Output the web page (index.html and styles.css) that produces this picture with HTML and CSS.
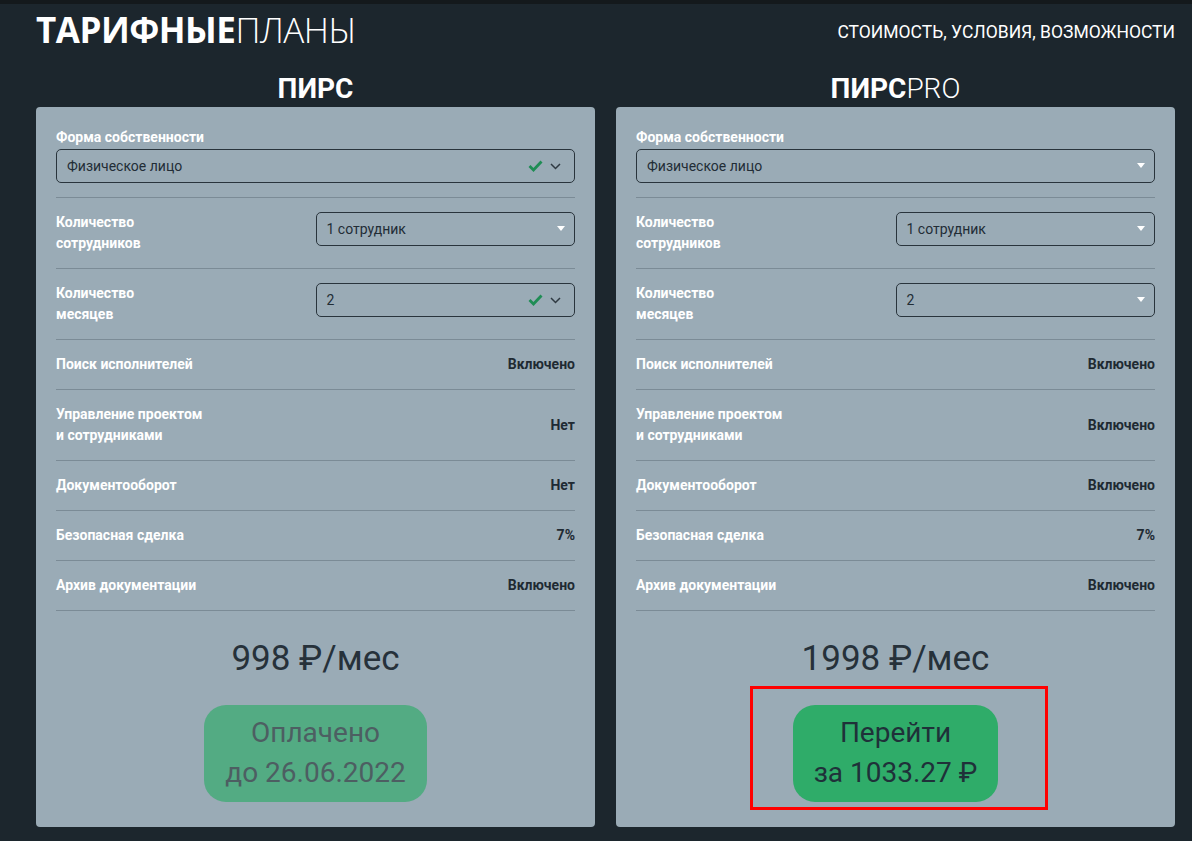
FILE: index.html
```html
<!DOCTYPE html>
<html lang="ru">
<head>
<meta charset="utf-8">
<title>Тарифные планы</title>
<link rel="stylesheet" href="styles.css">
</head>
<body>
<div class="page">
  <header class="header">
    <h1 class="title"><b>ТАРИФНЫЕ</b>ПЛАНЫ</h1>
    <div class="subtitle">СТОИМОСТЬ, УСЛОВИЯ, ВОЗМОЖНОСТИ</div>
  </header>

  <div class="plans">
    <section class="plan">
      <h2 class="plan-title"><b>ПИРС</b></h2>
      <div class="card">
        <div class="row row-stack">
          <div class="label">Форма собственности</div>
          <div class="select">
            <span>Физическое лицо</span>
            <span class="valid">
              <svg class="check" width="15" height="12" viewBox="0 0 15 12"><path d="M1.5 6 L5.5 10 L13.5 1.5" fill="none" stroke="#1f8d55" stroke-width="2.8"/></svg>
              <svg class="chev" width="11" height="7" viewBox="0 0 11 7"><path d="M1 1 L5.5 5.5 L10 1" fill="none" stroke="#2f3a42" stroke-width="1.5"/></svg>
            </span>
          </div>
        </div>
        <div class="row row-grid">
          <div class="label">Количество<br>сотрудников</div>
          <div class="select">
            <span>1 сотрудник</span>
            <span class="caret"></span>
          </div>
        </div>
        <div class="row row-grid">
          <div class="label">Количество<br>месяцев</div>
          <div class="select">
            <span>2</span>
            <span class="valid">
              <svg class="check" width="15" height="12" viewBox="0 0 15 12"><path d="M1.5 6 L5.5 10 L13.5 1.5" fill="none" stroke="#1f8d55" stroke-width="2.8"/></svg>
              <svg class="chev" width="11" height="7" viewBox="0 0 11 7"><path d="M1 1 L5.5 5.5 L10 1" fill="none" stroke="#2f3a42" stroke-width="1.5"/></svg>
            </span>
          </div>
        </div>
        <div class="row row-line"><div class="label">Поиск исполнителей</div><div class="value">Включено</div></div>
        <div class="row row-line"><div class="label">Управление проектом<br>и сотрудниками</div><div class="value">Нет</div></div>
        <div class="row row-line"><div class="label">Документооборот</div><div class="value">Нет</div></div>
        <div class="row row-line"><div class="label">Безопасная сделка</div><div class="value">7%</div></div>
        <div class="row row-line"><div class="label">Архив документации</div><div class="value">Включено</div></div>
        <div class="footer">
          <div class="price">998 ₽/мес</div>
          <div class="btn-wrap">
            <button class="btn btn-paid" disabled>Оплачено<br>до 26.06.2022</button>
          </div>
        </div>
      </div>
    </section>

    <section class="plan">
      <h2 class="plan-title"><b>ПИРС</b><span class="light">PRO</span></h2>
      <div class="card">
        <div class="row row-stack">
          <div class="label">Форма собственности</div>
          <div class="select">
            <span>Физическое лицо</span>
            <span class="caret"></span>
          </div>
        </div>
        <div class="row row-grid">
          <div class="label">Количество<br>сотрудников</div>
          <div class="select">
            <span>1 сотрудник</span>
            <span class="caret"></span>
          </div>
        </div>
        <div class="row row-grid">
          <div class="label">Количество<br>месяцев</div>
          <div class="select">
            <span>2</span>
            <span class="caret"></span>
          </div>
        </div>
        <div class="row row-line"><div class="label">Поиск исполнителей</div><div class="value">Включено</div></div>
        <div class="row row-line"><div class="label">Управление проектом<br>и сотрудниками</div><div class="value">Включено</div></div>
        <div class="row row-line"><div class="label">Документооборот</div><div class="value">Включено</div></div>
        <div class="row row-line"><div class="label">Безопасная сделка</div><div class="value">7%</div></div>
        <div class="row row-line"><div class="label">Архив документации</div><div class="value">Включено</div></div>
        <div class="footer">
          <div class="price">1998 ₽/мес</div>
          <div class="btn-wrap">
            <button class="btn btn-go">Перейти<br>за 1033.27 ₽</button>
            <span class="highlight"></span>
          </div>
        </div>
      </div>
    </section>
  </div>
</div>
</body>
</html>
```

FILE: styles.css
```css
* { box-sizing: border-box; }

html, body {
  margin: 0;
  padding: 0;
}

body {
  background: #1c262d;
  border-top: 4px solid #14191c;
  font-family: Roboto, "Noto Sans", sans-serif;
  min-height: 841px;
}

.page {
  padding: 0 17px 0 36px;
}

.header {
  height: 52px;
  display: flex;
  align-items: center;
  justify-content: space-between;
}

.title {
  margin: 0;
  font-family: "Open Sans", "Noto Sans", sans-serif;
  font-size: 35px;
  font-weight: 300;
  color: #ffffff;
  letter-spacing: -0.5px;
  line-height: 40px;
}

.title b {
  font-weight: 700;
}

.subtitle {
  color: #ffffff;
  font-size: 17.5px;
  font-weight: 400;
  padding-top: 4px;
}

.plans {
  display: grid;
  grid-template-columns: 1fr 1fr;
  gap: 21px;
}

.plan {
  display: flex;
  flex-direction: column;
}

.plan-title {
  margin: 18px 0 3px;
  height: 30px;
  line-height: 30px;
  text-align: center;
  color: #ffffff;
  font-size: 28px;
  font-weight: 400;
}

.plan-title b {
  font-weight: 700;
}

.plan-title .light {
  font-weight: 300;
}

.card {
  background: #9aabb6;
  border-radius: 4px;
  padding: 7px 20px 25px;
}

.row {
  padding: 14px 0;
  border-bottom: 1px solid #7b8b96;
}

.row-stack .label {
  margin-top: -1px;
  margin-bottom: 1px;
}

.label {
  color: #ffffff;
  font-size: 14px;
  font-weight: 700;
  line-height: 21px;
}

.value {
  color: #1f2a33;
  font-size: 14px;
  font-weight: 700;
  line-height: 21px;
  text-align: right;
}

.row-grid {
  display: grid;
  grid-template-columns: 1fr 1fr;
  align-items: start;
}

.row-line {
  display: flex;
  justify-content: space-between;
  align-items: center;
}

.select {
  height: 34px;
  border: 1px solid #29343c;
  border-radius: 5px;
  display: flex;
  align-items: center;
  justify-content: space-between;
  padding: 0 8px 1px 10px;
  font-size: 14px;
  color: #222d36;
}

.valid {
  display: flex;
  align-items: center;
  gap: 7px;
  padding-right: 5px;
}

.check {
  display: block;
}

.chev {
  display: block;
  margin-top: 1px;
}

.caret {
  width: 0;
  height: 0;
  border-left: 4.5px solid transparent;
  border-right: 4.5px solid transparent;
  border-top: 5px solid #ffffff;
  margin-right: 1px;
}

.footer {
  padding-top: 27px;
  display: flex;
  flex-direction: column;
  align-items: center;
}

.price {
  font-size: 35px;
  line-height: 42px;
  color: #26313a;
  font-weight: 400;
}

.btn-wrap {
  position: relative;
  margin-top: 25px;
}

.btn {
  display: block;
  border: none;
  font-family: Roboto, "Noto Sans", sans-serif;
  font-size: 28px;
  line-height: 40px;
  padding: 8px 21px 9px;
  border-radius: 22px;
  text-align: center;
}

.btn-paid {
  background: #53ab83;
  color: #4d5e62;
}

.btn-go {
  background: #2fac69;
  color: #1f3139;
  cursor: pointer;
}

.highlight {
  position: absolute;
  top: -19px;
  bottom: -8px;
  left: -43px;
  right: -50px;
  border: 3px solid #ff0000;
  pointer-events: none;
}
```
